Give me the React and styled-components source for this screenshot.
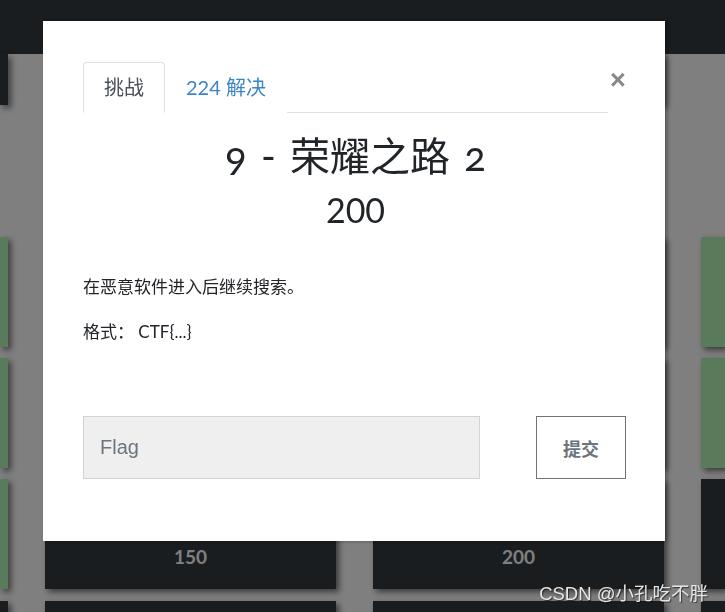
import React from "react";
import styled, { createGlobalStyle } from "styled-components";

const GlobalStyle = createGlobalStyle`
    html, body {
        margin: 0;
        padding: 0;
        background: #ffffff;
        overflow: hidden;
        font-family: Lato, "Noto Sans CJK SC", sans-serif;
        color: #212529;
    }
    * {
        box-sizing: border-box;
    }
`;

/* Page behind the modal */
const Page = styled.div`
    width: 725px;
    height: 612px;
    overflow: hidden;
`;

const NavBar = styled.div`
    height: 54px;
    background: #343a40;
`;

const Board = styled.div`
    display: flex;
    flex-direction: column;
`;

const TileRow = styled.div`
    display: grid;
    grid-template-columns: 8px 291px 291px 1fr;
    column-gap: 37px;
    height: ${(p) => p.h || 110}px;
    margin-top: ${(p) => p.gap || 0}px;
`;

const Tile = styled.div`
    background: ${(p) => (p.solved ? "#b2f4b6" : "#343a40")};
    box-shadow: 3px 3px 6px rgba(0, 0, 0, 0.55);
    display: flex;
    flex-direction: column;
    align-items: center;
    justify-content: flex-end;
    padding-bottom: 21px;
    color: #ffffff;
    font-family: Lato, sans-serif;
    font-weight: 700;
    font-size: 19px;
`;

const Empty = styled.div``;

/* Modal */
const Backdrop = styled.div`
    position: fixed;
    inset: 0;
    z-index: 10;
    background: rgba(0, 0, 0, 0.5);
    padding-top: 21px;
    padding-left: 43px;
`;

const Modal = styled.div`
    width: 622px;
    height: 520px;
    background: #ffffff;
    box-shadow: 2px 0 4px rgba(0, 0, 0, 0.35);
    padding: 41px 37px 0 40px;
    display: flex;
    flex-direction: column;
`;

const Header = styled.div`
    display: flex;
    align-items: flex-start;
`;

const Tabs = styled.ul`
    flex: 1;
    display: flex;
    list-style: none;
    margin: 0;
    padding: 0;
    border-bottom: 1px solid #dee2e6;
`;

const Tab = styled.li`
    margin-bottom: -1px;
    padding: 12px 20px;
    font-size: 20px;
    line-height: 25px;
    color: ${(p) => (p.active ? "#495057" : "#3b84c6")};
    background: #ffffff;
    border: 1px solid ${(p) => (p.active ? "#dee2e6" : "transparent")};
    border-bottom-color: ${(p) => (p.active ? "#ffffff" : "transparent")};
    border-radius: 4px 4px 0 0;
`;

const Close = styled.button`
    width: 20px;
    margin-top: 5px;
    padding: 0;
    border: none;
    background: none;
    font-family: "Liberation Sans", Arial, sans-serif;
    font-size: 27px;
    font-weight: 700;
    line-height: 1;
    color: #888888;
    cursor: pointer;
`;

const Title = styled.h3`
    margin: 21px 0 0;
    text-align: center;
    font-weight: 400;
    font-size: 40px;
    line-height: 44px;
    word-spacing: 4px;
    font-variant-numeric: oldstyle-nums;
    color: #212529;
`;

const Value = styled.h4`
    margin: 11px 0 0;
    text-align: center;
    font-weight: 400;
    font-size: 34px;
    line-height: 42px;
    color: #212529;
`;

const Desc = styled.p`
    margin: ${(p) => p.top || 0}px 0 0;
    font-size: 17px;
    line-height: 24px;
`;

const SubmitRow = styled.div`
    display: flex;
    justify-content: space-between;
    margin-top: 72px;
    padding-right: 2px;
`;

const FlagInput = styled.input`
    width: 397px;
    height: 63px;
    background: #efefef;
    border: 1px solid #ced4da;
    padding: 0 16px;
    font-family: "Liberation Sans", Arial, sans-serif;
    font-size: 20px;
    color: #495057;
    outline: none;
    &::placeholder {
        color: #6c757d;
    }
`;

const SubmitBtn = styled.button`
    width: 90px;
    height: 63px;
    background: #ffffff;
    border: 1px solid #6c757d;
    font-family: "Noto Sans CJK SC", sans-serif;
    font-weight: 700;
    font-size: 18px;
    color: #6c757d;
`;

const Watermark = styled.div`
    position: fixed;
    z-index: 20;
    right: 17px;
    bottom: 7px;
    font-family: "Liberation Sans", "Noto Sans CJK SC", sans-serif;
    font-size: 18.5px;
    color: #e6e6e6;
    text-shadow: 1px 1px 1px rgba(0, 0, 0, 0.6);
`;

const App = () => (
    <>
        <GlobalStyle />
        <Page>
            <NavBar />
            <Board>
                <TileRow h={51}>
                    <Tile />
                    <Tile />
                    <Tile />
                    <Empty />
                </TileRow>
                <TileRow gap={132}>
                    <Tile solved />
                    <Tile solved />
                    <Tile solved />
                    <Tile solved />
                </TileRow>
                <TileRow gap={11}>
                    <Tile solved />
                    <Tile solved />
                    <Tile solved />
                    <Tile solved />
                </TileRow>
                <TileRow gap={11}>
                    <Tile solved />
                    <Tile>150</Tile>
                    <Tile>200</Tile>
                    <Tile />
                </TileRow>
                <TileRow gap={12}>
                    <Tile />
                    <Tile />
                    <Tile />
                    <Tile />
                </TileRow>
            </Board>
        </Page>
        <Backdrop>
            <Modal>
                <Header>
                    <Tabs>
                        <Tab active>挑战</Tab>
                        <Tab>224 解决</Tab>
                    </Tabs>
                    <Close>×</Close>
                </Header>
                <Title>9 - 荣耀之路 2</Title>
                <Value>200</Value>
                <Desc top={44}>在恶意软件进入后继续搜索。</Desc>
                <Desc top={21}>格式： CTF{"{...}"}</Desc>
                <SubmitRow>
                    <FlagInput placeholder="Flag" />
                    <SubmitBtn>提交</SubmitBtn>
                </SubmitRow>
            </Modal>
        </Backdrop>
        <Watermark>CSDN @小孔吃不胖</Watermark>
    </>
);

export default App;
